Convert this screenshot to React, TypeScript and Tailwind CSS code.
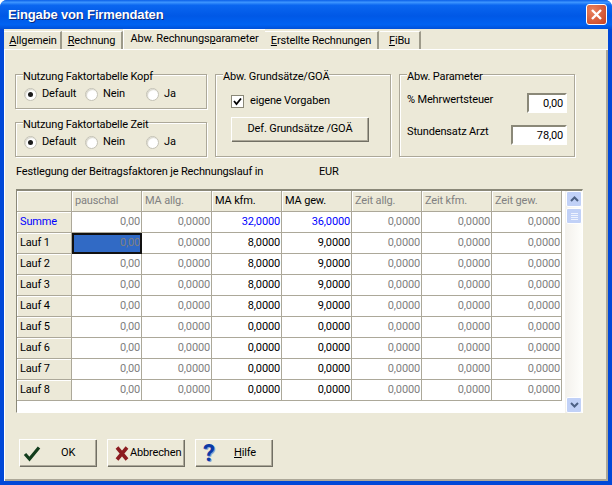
const GRAU = "text-[#808080]"
const BLAU = "text-[#0000ff]"
const SCHWARZ = "text-black"

type Cell = { text: string; color: string }

const kopf = [
  { text: "", color: SCHWARZ },
  { text: "pauschal", color: GRAU },
  { text: "MA allg.", color: GRAU },
  { text: "MA kfm.", color: SCHWARZ },
  { text: "MA gew.", color: SCHWARZ },
  { text: "Zeit allg.", color: GRAU },
  { text: "Zeit kfm.", color: GRAU },
  { text: "Zeit gew.", color: GRAU },
]

function zeile(kfm: string, gew: string, farbe: string): Cell[] {
  return [
    { text: "0,00", color: GRAU },
    { text: "0,0000", color: GRAU },
    { text: kfm, color: farbe },
    { text: gew, color: farbe },
    { text: "0,0000", color: GRAU },
    { text: "0,0000", color: GRAU },
    { text: "0,0000", color: GRAU },
  ]
}

const zeilen = [
  { name: "Summe", color: BLAU, cells: zeile("32,0000", "36,0000", BLAU) },
  { name: "Lauf 1", color: SCHWARZ, cells: zeile("8,0000", "9,0000", SCHWARZ) },
  { name: "Lauf 2", color: SCHWARZ, cells: zeile("8,0000", "9,0000", SCHWARZ) },
  { name: "Lauf 3", color: SCHWARZ, cells: zeile("8,0000", "9,0000", SCHWARZ) },
  { name: "Lauf 4", color: SCHWARZ, cells: zeile("8,0000", "9,0000", SCHWARZ) },
  { name: "Lauf 5", color: SCHWARZ, cells: zeile("0,0000", "0,0000", SCHWARZ) },
  { name: "Lauf 6", color: SCHWARZ, cells: zeile("0,0000", "0,0000", SCHWARZ) },
  { name: "Lauf 7", color: SCHWARZ, cells: zeile("0,0000", "0,0000", SCHWARZ) },
  { name: "Lauf 8", color: SCHWARZ, cells: zeile("0,0000", "0,0000", SCHWARZ) },
]

function Radio({ label, checked, width }: { label: string; checked?: boolean; width: string }) {
  return (
    <div className={`flex items-center gap-[5px] ${width}`}>
      <span className="flex h-[13px] w-[13px] items-center justify-center rounded-full border border-[#c4c2b5] bg-white shadow-[inset_1px_1px_1px_#d8d6cb]">
        {checked && <span className="h-[5px] w-[5px] rounded-full bg-[#1c1c1c]" />}
      </span>
      <span>{label}</span>
    </div>
  )
}

function GroupBox({ title, className, children }: { title: string; className: string; children: React.ReactNode }) {
  return (
    <div className={`relative border border-[#aca899] shadow-[1px_1px_0_#fff,inset_1px_1px_0_#fff] ${className}`}>
      <span className="absolute left-[7px] top-[-5px] bg-[#ece9d8] leading-[13px]">{title}</span>
      {children}
    </div>
  )
}

function RadioGroup({ title }: { title: string }) {
  return (
    <GroupBox title={title} className="h-[35px] w-[192px]">
      <div className="flex h-full items-center pl-[8px] pt-[5px]">
        <Radio label="Default" checked width="w-[61px]" />
        <Radio label="Nein" width="w-[61px]" />
        <Radio label="Ja" width="w-[40px]" />
      </div>
    </GroupBox>
  )
}

function Field({ value, width }: { value: string; width: string }) {
  return (
    <div className={`h-[20px] ${width} border-2 border-b-white border-l-[#8a8878] border-r-white border-t-[#8a8878] bg-white pr-[2px] text-right leading-[17px]`}>
      {value}
    </div>
  )
}

function XpButton({ children, className }: { children: React.ReactNode; className: string }) {
  return (
    <div className={`flex items-center border-l border-t border-l-white border-t-white bg-[#ece9d8] shadow-[inset_-1px_-1px_0_#aca899,1px_1px_0_#716f64] ${className}`}>
      {children}
    </div>
  )
}

function Tab({ children, className }: { children: React.ReactNode; className: string }) {
  return <div className={`flex items-center justify-center ${className}`}>{children}</div>
}

function ScrollButton({ up }: { up?: boolean }) {
  return (
    <div className="flex h-[16px] w-[16px] items-center justify-center rounded-[2px] border border-white bg-[#c1d1f7]">
      <svg width="9" height="6" viewBox="0 0 9 6">
        <path d={up ? "M1 5 L4.5 1.5 L8 5" : "M1 1 L4.5 4.5 L8 1"} fill="none" stroke="#4d6185" strokeWidth="2" />
      </svg>
    </div>
  )
}

export default function App() {
  return (
    <div className="flex h-[485px] w-[612px] flex-col overflow-hidden rounded-t-[7px] bg-[#0054e3] font-['Roboto',Arial,sans-serif] text-[11px] tracking-[-0.15px] text-black">
      <div className="flex h-[29px] shrink-0 items-center justify-between bg-[linear-gradient(180deg,#0a5fe8_0%,#3d95ff_8%,#0a66f0_18%,#0058e6_55%,#0062f2_85%,#0050d8_100%)] pl-[8px] pr-[5px]">
        <span className="font-['Liberation_Sans',Arial,sans-serif] text-[13px] font-bold tracking-[-0.15px] text-white [text-shadow:1px_1px_0_#0a2a80]">Eingabe von Firmendaten</span>
        <div className="flex h-[21px] w-[21px] items-center justify-center rounded-[3px] border border-white bg-[radial-gradient(circle_at_30%_30%,#e9835f,#c8401f)]">
          <svg width="13" height="13" viewBox="0 0 13 13">
            <path d="M2 2 L11 11 M11 2 L2 11" stroke="#fff" strokeWidth="2.4" />
          </svg>
        </div>
      </div>

      <div className="flex min-h-0 flex-1 flex-col border-x-4 border-b-4 border-[#0048d8] bg-[#ece9d8]">
        <div className="flex h-[20px] shrink-0 items-end">
          <Tab className="h-[18px] w-[58px] border-r-2 border-t border-r-[#9d9a8a] border-t-white pl-[2px] pt-[1px]"><span><span className="underline">A</span>llgemein</span></Tab>
          <Tab className="h-[18px] w-[61px] border-r-2 border-t border-r-[#9d9a8a] border-t-white pt-[1px]"><span><span className="underline">R</span>echnung</span></Tab>
          <Tab className="h-[20px] w-[142px] border-l border-t border-white"><span>Abw. Rechnungs<span className="underline">p</span>arameter</span></Tab>
          <Tab className="h-[18px] w-[114px] border-r-2 border-t border-r-[#9d9a8a] border-t-white pt-[1px]"><span><span className="underline">E</span>rstellte Rechnungen</span></Tab>
          <Tab className="ml-[1px] h-[18px] w-[41px] border-r-2 border-t border-r-[#9d9a8a] border-t-white pt-[1px]"><span><span className="underline">F</span>iBu</span></Tab>
        </div>

        <div className="flex min-h-0 flex-1 flex-col border-l border-t border-l-white border-t-white pl-[10px] pt-[24px] shadow-[inset_-2px_-2px_0_#aca899]">
          <div className="flex h-[83px] shrink-0 gap-[8px]">
            <div className="flex flex-col gap-[13px]">
              <RadioGroup title="Nutzung Faktortabelle Kopf" />
              <RadioGroup title="Nutzung Faktortabelle Zeit" />
            </div>
            <GroupBox title="Abw. Grundsätze/GOÄ" className="h-[83px] w-[176px]">
              <div className="flex flex-col pl-[15px] pt-[20px]">
                <div className="flex h-[13px] items-center gap-[6px]">
                  <span className="flex h-[13px] w-[13px] items-center justify-center border border-[#8a8878] bg-white">
                    <svg width="9" height="9" viewBox="0 0 9 9">
                      <path d="M1 4 L3.5 7 L8 1.5" fill="none" stroke="#000" strokeWidth="1.8" />
                    </svg>
                  </span>
                  <span>eigene Vorgaben</span>
                </div>
                <XpButton className="mt-[9px] h-[24px] w-[137px] justify-center">Def. Grundsätze /GOÄ</XpButton>
              </div>
            </GroupBox>
            <GroupBox title="Abw. Parameter" className="h-[83px] w-[176px]">
              <div className="flex h-full flex-col pl-[7px] pr-[7px] pt-[18px]">
                <div className="flex h-[20px] items-center justify-between">
                  <span className="-mt-[6px]">% Mehrwertsteuer</span>
                  <Field value="0,00" width="w-[40px]" />
                </div>
                <div className="mt-[12px] flex h-[20px] items-center justify-between">
                  <span className="-mt-[6px]">Stundensatz Arzt</span>
                  <Field value="78,00" width="w-[56px]" />
                </div>
              </div>
            </GroupBox>
          </div>

          <div className="mt-[9px] flex h-[13px] shrink-0 items-center pl-[1px]">
            <span className="w-[303px]">Festlegung der Beitragsfaktoren je Rechnungslauf in</span>
            <span>EUR</span>
          </div>

          <div className="ml-[1px] mt-[10px] flex h-[224px] w-[567px] shrink-0 border-b border-l border-r border-t-2 border-b-white border-l-[#8a8878] border-r-white border-t-[#8a8878] bg-white">
            <div className="w-[545px]">
              <div className="grid grid-cols-[55px_repeat(7,70px)]">
                {kopf.map((k, i) => (
                  <div key={i} className={`flex h-[21px] items-center border-b border-r border-[#aca899] bg-[#ece9d8] pl-[3px] pt-[1px] shadow-[inset_1px_1px_0_#fff] ${k.color}`}>
                    {k.text}
                  </div>
                ))}
                {zeilen.map((z) => (
                  <div key={z.name} className="contents">
                    <div className={`flex h-[21px] items-center border-b border-r border-[#aca899] bg-[#ece9d8] pl-[3px] pt-[1px] shadow-[inset_1px_1px_0_#fff] ${z.color}`}>
                      {z.name}
                    </div>
                    {z.cells.map((c, i) => {
                      const markiert = z.name === "Lauf 1" && i === 0
                      return (
                        <div
                          key={i}
                          className={
                            markiert
                              ? "flex h-[21px] items-center justify-end border-2 border-[#111] bg-[#316ac5] text-[#808080]"
                              : `flex h-[21px] items-center justify-end border-b border-r border-[#aca899] pr-[1px] ${c.color}`
                          }
                        >
                          {c.text}
                        </div>
                      )
                    })}
                  </div>
                ))}
              </div>
            </div>
            <div className="ml-[3px] flex h-[222px] w-[17px] flex-col justify-between bg-[linear-gradient(90deg,#f3f1ec,#fefefb)] pl-[1px]">
              <div className="flex flex-col gap-[1px]">
                <ScrollButton up />
                <div className="flex h-[16px] w-[16px] flex-col items-center justify-center gap-[1px] rounded-[2px] border border-white bg-[#c1d1f7]">
                  <span className="h-px w-[7px] bg-[#eef3fe]" />
                  <span className="h-px w-[7px] bg-[#eef3fe]" />
                  <span className="h-px w-[7px] bg-[#eef3fe]" />
                  <span className="h-px w-[7px] bg-[#eef3fe]" />
                </div>
              </div>
              <ScrollButton />
            </div>
          </div>

          <div className="mt-[26px] flex shrink-0 gap-[11px] pl-[4px]">
            <XpButton className="h-[27px] w-[77px] pl-[3px]">
              <svg width="18" height="17" viewBox="0 0 18 17">
                <path d="M2 9 L6.5 14 L16 2.5" fill="none" stroke="#123d1c" strokeWidth="3.2" />
              </svg>
              <span className="ml-[20px]">OK</span>
            </XpButton>
            <XpButton className="h-[27px] w-[77px] pl-[7px]">
              <svg width="14" height="15" viewBox="0 0 14 15">
                <path d="M2 1.5 L12 13.5 M12 1.5 L2 13.5" stroke="#8c1c20" strokeWidth="3.6" />
              </svg>
              <span className="ml-[1px]">Abbrechen</span>
            </XpButton>
            <XpButton className="h-[27px] w-[77px] pl-[7px]">
              <span className="w-[13px] text-[24px] font-bold leading-none text-[#0b3aa6] [text-shadow:1px_1px_0_#8f9ed0]">?</span>
              <span className="ml-[18px]"><span className="underline">H</span>ilfe</span>
            </XpButton>
          </div>
        </div>
      </div>
    </div>
  )
}
